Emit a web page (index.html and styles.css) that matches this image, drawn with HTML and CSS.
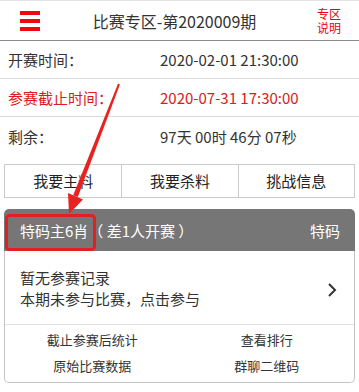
FILE: index.html
```html
<!DOCTYPE html>
<html lang="zh-CN">
<head>
    <meta charset="UTF-8">
    <meta name="viewport" content="width=device-width, initial-scale=1.0">
    <title>比赛专区</title>
    <link rel="stylesheet" href="styles.css">
</head>
<body>

<div class="page">
    <div class="header">
        <div class="menu">
            <span></span><span></span><span></span>
        </div>
        <div class="title">比赛专区-第2020009期</div>
        <div class="help">
            <div>专区</div>
            <div>说明</div>
        </div>
    </div>

    <div class="info">
        <div class="row">
            <span class="label">开赛时间：</span>
            <span class="value">2020-02-01 21:30:00</span>
        </div>
        <div class="row red">
            <span class="label">参赛截止时间：</span>
            <span class="value">2020-07-31 17:30:00</span>
        </div>
        <div class="row">
            <span class="label">剩余：</span>
            <span class="value">97天 00时 46分 07秒</span>
        </div>
    </div>

    <div class="tabs">
        <div class="tab">我要主料</div>
        <div class="tab">我要杀料</div>
        <div class="tab">挑战信息</div>
    </div>

    <div class="card">
        <div class="card-head">
            <span class="card-title">特码主6肖</span>
            <span class="card-sub">（ 差1人开赛 ）</span>
            <span class="card-type">特码</span>
        </div>
        <div class="card-body">
            <div class="record">
                <div class="record-text">
                    <div>暂无参赛记录</div>
                    <div>本期未参与比赛，点击参与</div>
                </div>
                <svg class="chevron" width="10" height="14" viewBox="0 0 10 14">
                    <polyline points="2,1 8,7 2,13" fill="none" stroke="#333" stroke-width="2"/>
                </svg>
            </div>
            <div class="links">
                <a href="#">截止参赛后统计</a>
                <a href="#">查看排行</a>
                <a href="#">原始比赛数据</a>
                <a href="#">群聊二维码</a>
            </div>
        </div>
    </div>

    <!-- annotation overlay -->
    <svg class="mark" width="359" height="392" viewBox="0 0 359 392">
        <polygon points="119.9,84.4 118.1,83.6 73.2,195.3 77.8,197.1" fill="#e8231f"/>
        <polygon points="68,193 83,199.5 69,214" fill="#e8231f"/>
        <rect x="6.5" y="215.5" width="88" height="34" rx="3" fill="none" stroke="#e3201f" stroke-width="3"/>
    </svg>
</div>

</body>
</html>
```

FILE: styles.css
```css
body {
    margin: 0;
    font-family: "Noto Sans CJK SC", "Microsoft YaHei", sans-serif;
    color: #333;
    background-color: #fff;
}
.page {
    position: relative;
    width: 359px;
    height: 392px;
    overflow: hidden;
}
.header {
    display: grid;
    grid-template-columns: 50px 1fr 60px;
    align-items: center;
    height: 39px;
    border-top: 1px solid #e3e3e3;
    border-bottom: 1px solid #8a8a8a;
}
.menu {
    display: flex;
    flex-direction: column;
    gap: 4px;
    padding-left: 20px;
}
.menu span {
    display: block;
    width: 20px;
    height: 4px;
    background-color: #f5050f;
}
.title {
    text-align: center;
    font-size: 16px;
    line-height: 20px;
}
.help {
    text-align: center;
    font-size: 12px;
    line-height: 14px;
    color: #e60012;
}
.help div {
    height: 14px;
}
.info .row {
    display: flex;
    align-items: center;
    height: 37px;
    padding: 0 8px;
    font-size: 15px;
    border-bottom: 1px solid #dcdcdc;
}
.info .row:last-child {
    border-bottom: none;
    height: 38px;
}
.info .row.red {
    color: #dc1a22;
}
.info .label {
    width: 152px;
}
.tabs {
    display: grid;
    grid-template-columns: 1fr 1fr 1fr;
    margin: 9px 4px 0 4px;
    border: 1px solid #cacaca;
}
.tab {
    height: 32px;
    line-height: 32px;
    text-align: center;
    font-size: 15px;
    color: #222;
    border-left: 1px solid #cacaca;
}
.tab:first-child {
    border-left: none;
}
.card {
    margin: 11px 4px 0 4px;
}
.card-head {
    display: flex;
    align-items: center;
    height: 42px;
    padding: 0 15px 0 16px;
    background-color: #767676;
    color: #fff;
    font-size: 15px;
    border-radius: 5px 5px 0 0;
}
.card-sub {
    white-space: pre;
}
.card-type {
    margin-left: auto;
}
.card-body {
    border: 1px solid #c4c4c4;
    border-top: none;
    border-radius: 0 0 5px 5px;
}
.record {
    display: flex;
    align-items: center;
    padding: 16px 15px 15px 15px;
    border-bottom: 1px solid #e0e0e0;
    font-size: 15px;
    line-height: 21px;
}
.record-text {
    flex: 1;
}
.chevron {
    margin-right: 2px;
    margin-top: 3px;
}
.links {
    display: grid;
    grid-template-columns: 1fr 1fr;
    padding: 2px 0 3px 0;
}
.links a {
    text-align: center;
    font-size: 13px;
    line-height: 26px;
    color: #333;
    text-decoration: none;
}
.mark {
    position: absolute;
    top: 0;
    left: 0;
    pointer-events: none;
}
```
